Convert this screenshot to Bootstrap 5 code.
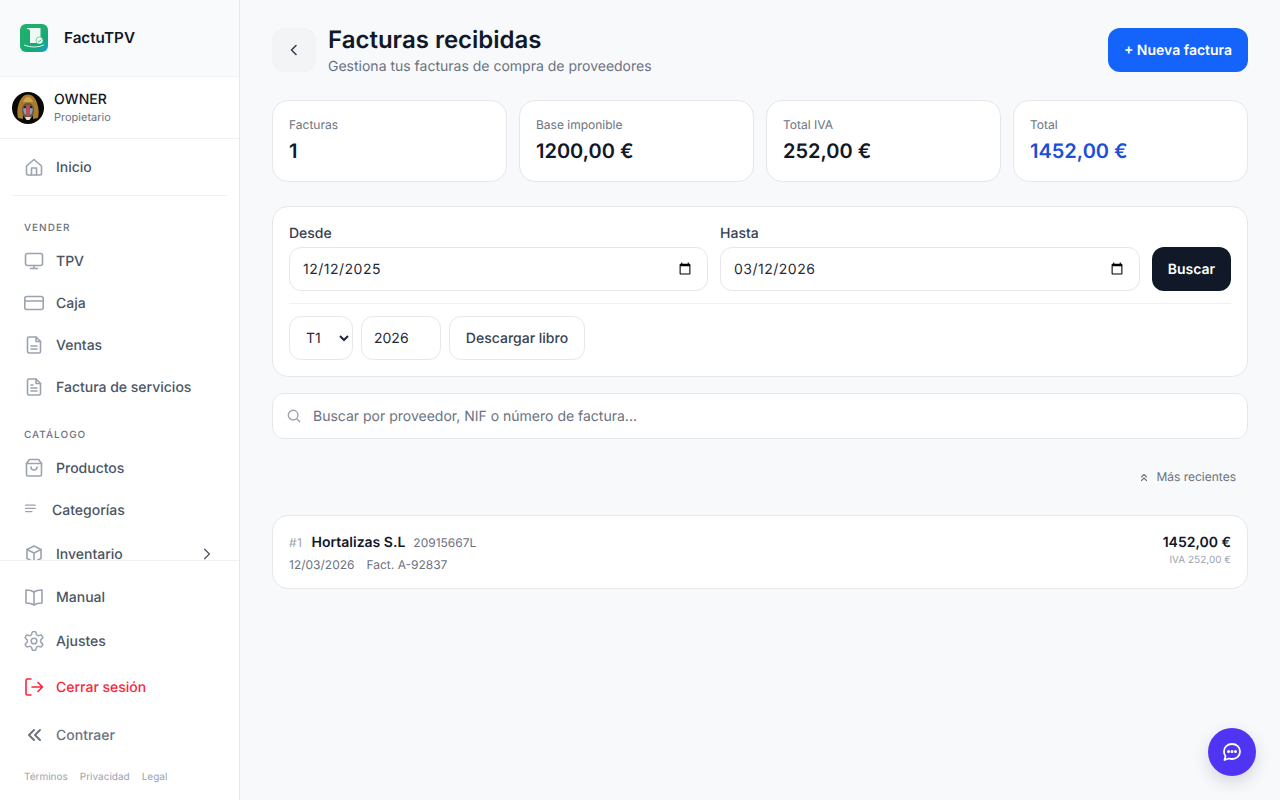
<!DOCTYPE html>
<html lang="es">
<head>
<meta charset="utf-8">
<title>FactuTPV</title>
<link href="https://cdn.jsdelivr.net/npm/bootstrap@5.3.0/dist/css/bootstrap.min.css" rel="stylesheet">
<style>
html,body{height:100%;overflow:hidden}
body{font-family:Inter,"Liberation Sans",sans-serif;background:#f8f9fb;color:#111827;font-size:14px;text-rendering:geometricPrecision}
input,select,button{text-rendering:geometricPrecision}
.shell{height:800px}
.side{width:240px;flex:none;background:#fff;border-right:1px solid #e5e7eb;height:800px}
.brand{height:77px;background:#f8fafc;border-bottom:1px solid #f1f2f4;padding-left:19px;gap:15px}
.brand-name{font-size:15.200px;font-weight:600;color:#111827}
.userbox{height:62px;border-bottom:1px solid #f0f1f3;padding-left:12px;gap:10px}
.uname{font-size:14px;font-weight:500;line-height:17px;color:#111827;margin-top:-1px}
.urole{font-size:11px;line-height:14px;color:#6b7280;margin-top:2px}
.navscroll{height:421px;overflow:hidden;flex:none}
.nitem{height:42px;padding-left:24px;gap:12px;font-size:14px;font-weight:500;color:#4b5563;text-decoration:none}
.nitem svg{width:20px;height:20px;flex:none;stroke:#9ca3af;fill:none;stroke-width:1.6;stroke-linecap:round;stroke-linejoin:round}
.first-item{margin-top:7px}
.sep{height:1px;background:#f0f1f3;margin:7px 12px 0}
.sect{font-size:10px;font-weight:500;letter-spacing:1px;color:#6b7280;padding-left:24px;line-height:12px}
.s1{margin-top:26px;margin-bottom:6px}
.s2{margin-top:21px;margin-bottom:6px}
.inv-item{margin-top:2px}
.bottomnav{border-top:1px solid #f0f1f3;padding-top:14px}
.b44{height:44px}
.logout{color:#f9253a;margin-top:2px}
.nitem.logout svg{stroke:#f9253a}
.collapse-row{color:#6b7280;height:44px;margin-top:4px}
.nitem.collapse-row svg{stroke:#6b7280;stroke-width:1.9}
.legal{padding:13px 0 0 24px;gap:12px;font-size:10px;color:#9ca3af}
.mainarea{padding:28px 32px;min-width:0}
.backbtn{width:44px;height:44px;border-radius:12px;background:#f3f4f6;border:0;flex:none}
.ptitle{font-size:24px;font-weight:600;line-height:24px;color:#111827;margin:0}
.psub{font-size:14px;line-height:17px;color:#6b7280;margin-top:6px}
.newbtn{width:140px;height:44px;border-radius:12px;background:#1463fb;color:#fff;border:0;font-size:14px;font-weight:600}
.statgrid{display:grid;grid-template-columns:repeat(4,1fr);gap:12px;margin-top:25px}
.stat{height:82px;background:#fff;border:1px solid #e5e7eb;border-radius:16px;padding:16px}
.slabel{font-size:12px;line-height:15px;color:#6b7280}
.sval{font-size:20px;font-weight:600;line-height:24px;margin-top:7px;color:#111827}
.sval-blue{color:#1d4ed8}
.panel{background:#fff;border:1px solid #e5e7eb;border-radius:16px}
.filters{margin-top:24px;padding:17px 16px 16px;height:171px}
.flabel{font-size:14px;font-weight:500;line-height:17px;color:#374151;margin-top:1px;margin-bottom:5px}
.dcol-a{flex:0 0 419px;min-width:0}
.dcol-b{flex:1 1 0;min-width:0}
.fld{height:44px;border:1px solid #e5e7eb;border-radius:12px;background:#fff;color:#1f2937;font-size:14px;padding:0 13px;font-family:inherit;outline:0}
.fld-date{width:100%;letter-spacing:.5px}
.searchbtn{width:79px;height:44px;background:#111827;color:#fff;border:0;border-radius:12px;font-size:14px;font-weight:600;flex:none}
.fsep{height:1px;background:#f0f1f3;margin:12px 0}
.fld-sel{width:64px;padding:1px 0 0 12px}
.fld-year{width:80px;padding:0 12px}
.dlbtn{width:136px;height:44px;background:#fff;border:1px solid #e5e7eb;border-radius:12px;color:#374151;font-size:14px;font-weight:500}
.searchbar{margin-top:16px;height:46px;padding:0 14px;gap:10px;border-radius:12px}
.searchbar svg{width:14px;height:14px;fill:none;stroke:#9ca3af;stroke-width:1.6;stroke-linecap:round;flex:none}
.searchbar input{border:0;outline:0;flex:1;font-size:14px;font-family:inherit;color:#111827;background:transparent}
.searchbar input::placeholder{color:#6b7280;opacity:1}
.sortrow{height:20px;margin-top:28px;padding-right:12px;gap:7px;font-size:12px;color:#6b7280}
.sortrow svg{width:10px;height:10px;fill:none;stroke:#6b7280;stroke-width:1.100;stroke-linecap:round;stroke-linejoin:round}
.invoice{margin-top:28px;height:74px;padding:1px 16px 0}
.inum{font-size:12px;color:#9ca3af;letter-spacing:.5px;margin-right:1px}
.iname{font-size:14px;font-weight:600;color:#111827}
.inif{font-size:12px;color:#6b7280}
.iline1{gap:8px;line-height:17px}
.iline2{gap:12px;font-size:12px;color:#6b7280;line-height:15px;margin-top:6px}
.totals{margin-top:-5px}
.itotal{font-size:14px;font-weight:600;line-height:17px;color:#111827}
.iiva{font-size:10px;color:#9ca3af;line-height:12px;margin-top:3px}
.chat{position:fixed;right:24px;bottom:24px;width:48px;height:48px;border-radius:50%;background:#4f35f3;border:0;box-shadow:0 6px 16px rgba(40,40,80,.16)}
</style>
</head>
<body>
<div class="d-flex shell">
  <aside class="side d-flex flex-column">
    <div class="brand d-flex align-items-center">
      <svg width="30" height="30" viewBox="0 0 30 30"><defs><linearGradient id="lg" x1="0" y1="0" x2="1" y2="1"><stop offset="0" stop-color="#22b36b"/><stop offset=".7" stop-color="#17a974"/><stop offset="1" stop-color="#1c9be0"/></linearGradient></defs><rect x="1" y="1" width="28" height="28" rx="6" fill="url(#lg)"/><path d="M8 5h13.500v15H11V8q0-2-3-2z" fill="#eef7f2"/><path d="M5 22q10 4 20 0" stroke="#d8f3e6" stroke-width="1" fill="none"/><circle cx="20.500" cy="17.500" r="3.500" fill="#fff" stroke="#1fb26b" stroke-width=".6"/><path d="M19 17.500l1.200 1.200 2-2.200" stroke="#1fb26b" fill="none"/></svg>
      <span class="brand-name">FactuTPV</span>
    </div>
    <div class="userbox d-flex align-items-center">
      <svg width="32" height="32" viewBox="0 0 32 32"><circle cx="16" cy="16" r="16" fill="#090807"/><path d="M16 2.500c-5 0-8 5-9.500 10S5 22 6 26l5 1V16q1-4 5-4t5 4v11l5-1c1-4 1-8-.5-13.500S21 2.500 16 2.500z" fill="#a97b2c"/><path d="M16 5c-2 0-4 2-5 5h10c-1-3-3-5-5-5z" fill="#d3a347"/><path d="M16 11c-3.500 0-6 2.500-6 7 0 5 2.500 9 6 10 3.500-1 6-5 6-10 0-4.500-2.500-7-6-7z" fill="#62594e"/><path d="M11 17l3-1 .5 7-2-1zM21 17l-3-1-.5 7 2-1z" fill="#86a0b5"/><rect x="14.500" y="13" width="3" height="11" rx="1" fill="#d9434b"/><path d="M13 25h6l-1.500 3h-3z" fill="#e2dfd5"/><circle cx="13" cy="15" r=".9" fill="#120f0c"/><circle cx="19" cy="15" r=".9" fill="#120f0c"/></svg>
      <div><div class="uname">OWNER</div><div class="urole">Propietario</div></div>
    </div>
    <div class="navscroll">
      <a class="nitem first-item d-flex align-items-center" href="#"><svg viewBox="0 0 20 20"><path d="M2.500 9L10 2.500 17.500 9v7.500a1.500 1.500 0 0 1-1.500 1.500H4a1.500 1.500 0 0 1-1.500-1.500z"/><path d="M7.500 18v-7h5v7"/></svg>Inicio</a>
      <div class="sep"></div>
      <div class="sect s1">VENDER</div>
      <a class="nitem d-flex align-items-center" href="#"><svg viewBox="0 0 20 20"><rect x="1.500" y="2.500" width="17" height="12" rx="2"/><path d="M10 14.500v3M6.500 17.500h7"/></svg>TPV</a>
      <a class="nitem d-flex align-items-center" href="#"><svg viewBox="0 0 20 20"><rect x="0.800" y="3.500" width="18.400" height="13" rx="2"/><path d="M0.800 8h18.400"/></svg>Caja</a>
      <a class="nitem d-flex align-items-center" href="#"><svg viewBox="0 0 20 20"><path d="M12 2H5a1.500 1.500 0 0 0-1.500 1.500v13A1.500 1.500 0 0 0 5 18h10a1.500 1.500 0 0 0 1.500-1.500V6.500z"/><path d="M12 2v4.500h4.500M7 11h6M7 14h6"/></svg>Ventas</a>
      <a class="nitem d-flex align-items-center" href="#"><svg viewBox="0 0 20 20"><path d="M12 2H5a1.500 1.500 0 0 0-1.500 1.500v13A1.500 1.500 0 0 0 5 18h10a1.500 1.500 0 0 0 1.500-1.500V6.500z"/><path d="M12 2v4.500h4.500M7 8h2M7 11h6M7 14h6"/></svg>Factura de servicios</a>
      <div class="sect s2">CATÁLOGO</div>
      <a class="nitem d-flex align-items-center" href="#"><svg viewBox="0 0 20 20"><path d="M5.500 1.500h9l3 4v11a1.500 1.500 0 0 1-1.500 1.500H4a1.500 1.500 0 0 1-1.500-1.500v-11z"/><path d="M2.500 5.500h15M7 9a3 3 0 0 0 6 0"/></svg>Productos</a>
      <a class="nitem d-flex align-items-center" href="#"><svg viewBox="0 0 20 20" style="width:16px;height:16px"><path d="M2 4h12M2 8h12M2 12h8"/></svg>Categorías</a>
      <a class="nitem inv-item d-flex align-items-center pe-4" href="#"><svg viewBox="0 0 20 20"><path d="M10 2l7 3.500v9L10 18l-7-3.500v-9z"/><path d="M3 5.500l7 3.500 7-3.500M10 9v9"/></svg><span class="flex-grow-1">Inventario</span><svg viewBox="0 0 20 20" style="width:16px;height:16px;stroke:#4b5563"><path d="M7 4l6 6-6 6"/></svg></a>
    </div>
    <div class="bottomnav">
      <a class="nitem b44 d-flex align-items-center" href="#"><svg viewBox="0 0 20 20"><path d="M10 5c-2-1.500-4.500-2-8-2v13c3.500 0 6 .5 8 2 2-1.500 4.500-2 8-2V3c-3.500 0-6 .5-8 2zM10 5v13"/></svg>Manual</a>
      <a class="nitem b44 d-flex align-items-center" href="#"><svg viewBox="1.500 1.500 21 21"><circle cx="12" cy="12" r="3"/><path d="M12.220 2h-.44a2 2 0 0 0-2 2v.18a2 2 0 0 1-1 1.730l-.43.250a2 2 0 0 1-2 0l-.15-.080a2 2 0 0 0-2.730.730l-.22.380a2 2 0 0 0 .730 2.730l.15.100a2 2 0 0 1 1 1.720v.510a2 2 0 0 1-1 1.740l-.15.090a2 2 0 0 0-.730 2.730l.22.380a2 2 0 0 0 2.730.730l.15-.080a2 2 0 0 1 2 0l.43.250a2 2 0 0 1 1 1.730V20a2 2 0 0 0 2 2h.44a2 2 0 0 0 2-2v-.18a2 2 0 0 1 1-1.730l.43-.250a2 2 0 0 1 2 0l.15.080a2 2 0 0 0 2.730-.730l.22-.390a2 2 0 0 0-.730-2.730l-.15-.080a2 2 0 0 1-1-1.740v-.5a2 2 0 0 1 1-1.740l.15-.090a2 2 0 0 0 .730-2.730l-.22-.380a2 2 0 0 0-2.730-.730l-.15.080a2 2 0 0 1-2 0l-.43-.250a2 2 0 0 1-1-1.730V4a2 2 0 0 0-2-2z"/></svg>Ajustes</a>
      <a class="nitem b44 logout d-flex align-items-center" href="#"><svg viewBox="0 0 20 20"><path d="M7 2H3.500A1.500 1.500 0 0 0 2 3.500v13A1.500 1.500 0 0 0 3.500 18H7M8 10h10.500M14 5.500l4.500 4.500-4.500 4.500"/></svg>Cerrar sesión</a>
      <a class="nitem collapse-row d-flex align-items-center" href="#"><svg viewBox="0 0 20 20"><path d="M10 5l-5 5 5 5M16 5l-5 5 5 5"/></svg>Contraer</a>
      <div class="legal d-flex"><span>Términos</span><span>Privacidad</span><span>Legal</span></div>
    </div>
  </aside>
  <main class="mainarea flex-grow-1">
    <div class="d-flex align-items-start justify-content-between">
      <div class="d-flex gap-2">
        <button class="backbtn d-flex align-items-center justify-content-center" aria-label="Volver"><svg width="16" height="16" viewBox="0 0 16 16" fill="none" stroke="#374151" stroke-width="1.600" stroke-linecap="round" stroke-linejoin="round"><path d="M10 3.500L5.500 8l4.500 4.500"/></svg></button>
        <div class="ms-1">
          <h1 class="ptitle">Facturas recibidas</h1>
          <div class="psub">Gestiona tus facturas de compra de proveedores</div>
        </div>
      </div>
      <button class="newbtn">+ Nueva factura</button>
    </div>
    <div class="statgrid">
      <div class="stat"><div class="slabel">Facturas</div><div class="sval">1</div></div>
      <div class="stat"><div class="slabel">Base imponible</div><div class="sval">1200,00 €</div></div>
      <div class="stat"><div class="slabel">Total IVA</div><div class="sval">252,00 €</div></div>
      <div class="stat"><div class="slabel">Total</div><div class="sval sval-blue">1452,00 €</div></div>
    </div>
    <div class="panel filters">
      <div class="d-flex align-items-end gap-2">
        <div class="d-flex flex-grow-1 gap-2 datewrap">
          <div class="dcol-a"><div class="flabel">Desde</div><input class="fld fld-date" type="date" value="2025-12-12"></div>
          <div class="dcol-b ms-1"><div class="flabel">Hasta</div><input class="fld fld-date" type="date" value="2026-03-12"></div>
        </div>
        <button class="searchbtn ms-1">Buscar</button>
      </div>
      <div class="fsep"></div>
      <div class="d-flex gap-2">
        <select class="fld fld-sel"><option>T1</option><option>T2</option><option>T3</option><option>T4</option></select>
        <input class="fld fld-year" type="text" value="2026">
        <button class="dlbtn">Descargar libro</button>
      </div>
    </div>
    <div class="panel searchbar d-flex align-items-center">
      <svg viewBox="0 0 16 16"><circle cx="7" cy="7" r="5.500"/><path d="M11.200 11.200L14.500 14.500"/></svg>
      <input type="text" placeholder="Buscar por proveedor, NIF o número de factura...">
    </div>
    <div class="sortrow d-flex align-items-center justify-content-end">
      <svg viewBox="0 0 10 10"><path d="M2.500 5L5 2.500 7.500 5M2.500 8.500L5 6 7.500 8.500"/></svg><span>Más recientes</span>
    </div>
    <div class="panel invoice d-flex align-items-center justify-content-between">
      <div>
        <div class="iline1 d-flex align-items-baseline"><span class="inum">#1</span><span class="iname">Hortalizas S.L</span><span class="inif">20915667L</span></div>
        <div class="iline2 d-flex"><span>12/03/2026</span><span>Fact. A-92837</span></div>
      </div>
      <div class="text-end totals">
        <div class="itotal">1452,00 €</div>
        <div class="iiva">IVA 252,00 €</div>
      </div>
    </div>
  </main>
</div>
<button class="chat d-flex align-items-center justify-content-center" aria-label="Chat"><svg width="22" height="22" viewBox="0 0 22 22" fill="none" stroke="#fff" stroke-width="1.800" stroke-linejoin="round"><path d="M11 3c4.700 0 8 3.200 8 7.500S15.700 18 11 18c-1.100 0-2.100-.2-3-.5L3.500 19l1-3.800C3.500 14 3 12.400 3 10.500 3 6.200 6.300 3 11 3z"/><circle cx="7.500" cy="10.500" r=".6" fill="#fff"/><circle cx="11" cy="10.500" r=".6" fill="#fff"/><circle cx="14.500" cy="10.500" r=".6" fill="#fff"/></svg></button>
<script src="https://cdn.jsdelivr.net/npm/bootstrap@5.3.0/dist/js/bootstrap.bundle.min.js"></script>
</body>
</html>
